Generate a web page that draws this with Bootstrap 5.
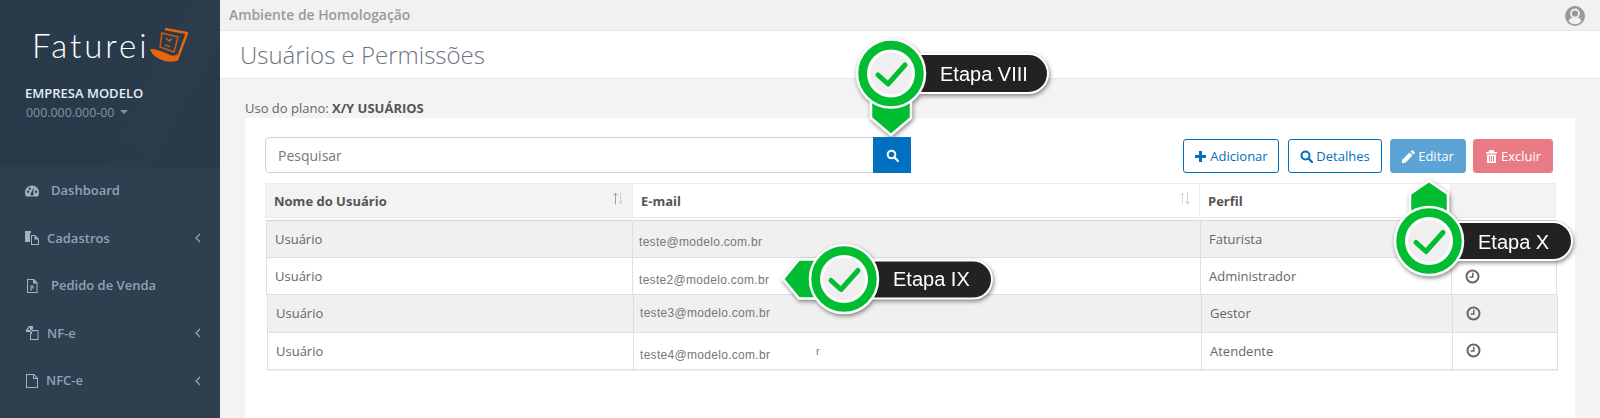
<!DOCTYPE html>
<html lang="pt-BR">
<head>
<meta charset="utf-8">
<title>Usuários e Permissões</title>
<link href="https://cdn.jsdelivr.net/npm/bootstrap@5.3.0/dist/css/bootstrap.min.css" rel="stylesheet">
<style>
html,body{height:418px;overflow:hidden}
body{font-family:"Open Sans","Liberation Sans",sans-serif;background:#f3f3f3;color:#666;font-size:13px}
.stage{position:relative;height:418px;width:1600px}
.side{width:220px;flex:none;background:#2f3f50;color:#8fa2b8}
.side-head{height:167px;padding-top:27px;background:
 linear-gradient(118deg,transparent 62%,rgba(255,255,255,.008) 62%,rgba(255,255,255,.008) 78%,transparent 78%),
 linear-gradient(40deg,rgba(0,0,0,.025) 38%,transparent 38%),
 #293a4b}
.brand{height:36px;padding-left:32px;gap:0}
.brand-word{font-family:"Lato","Open Sans",sans-serif;font-weight:300;font-size:33px;line-height:36px;color:#fff;letter-spacing:3px}
.co-name{margin:20px 0 0 25px;font-weight:600;font-size:13px;line-height:20px;color:#e6edf5}
.co-doc{margin:0 0 0 26px;font-size:12.4px;line-height:20px;color:#8293a6}
.caret-mini{display:inline-block;margin-left:6px;vertical-align:3px;border:4px solid transparent;border-top-color:#8293a6;border-bottom:0}
.side-link{height:47.5px;color:#8fa2b8;font-weight:600;font-size:13px;padding:0 19.5px 0 25px}
.side-link:hover{color:#8fa2b8}
.side-ico{width:14px;height:16px;flex:none;fill:#a3b2c4}
.lab-wide{margin-left:12px}
.lab-mid{margin-left:7px}
.lab-nar{margin-left:8px}
.chev{width:6px;height:10px;margin-left:auto;fill:none;stroke:#8fa2b8;stroke-width:1.3}
.main-col{min-width:0}
.topline{height:31px;padding:0 15px 0 9px;border-bottom:1px solid #e6e6e6;background:#f1f1f1;font-weight:600;font-size:13.9px;color:#9a9a9a}
.user-ico{width:20px;height:20px;margin-top:2px}
.titlebar{height:48px;padding-left:20px;background:#fff;border-bottom:1px solid #e8e8e8}
.titlebar h1{font-size:24px;font-weight:300;margin:0;color:#6b7480;line-height:47px}
.plan{margin:20px 0 0 25px;font-size:13px;line-height:18px;height:19px;color:#666}
.plan b{color:#555}
.panel{margin:0 25px 0 25px;padding:19px 20px 0 20px;background:#fff;height:300px}
.search-box{width:646px;height:36px}
.search-box .form-control{border-radius:4px 0 0 4px;border-color:#ccd3da;font-size:14px;padding-left:12px;color:#777;box-shadow:none;height:36px}
.search-box .form-control::placeholder{color:#777}
.search-btn{width:38px;padding:0;border-radius:0;background:#0070c0;border-color:#0070c0;color:#fff}
.act-group{margin-right:2px;height:34px;margin-top:2px}
.act{height:34px;font-size:13px;padding:0;display:inline-flex;align-items:center;justify-content:center;gap:3px;border-radius:3px;line-height:1}
.act svg{width:13px;height:13px;flex:none;fill:currentColor}
.act-line{background:#fff;border-color:#0070c0;color:#0070c0}
.act-add{width:96px;margin-right:9px}
.act-det{width:94px;margin-right:8px}
.act-edit{width:76px;margin-right:7px;background:#5ca3d6;border-color:#5ca3d6;color:#fff}
.act-del{width:80px;background:#e97b86;border-color:#e97b86;color:#fff}
.grid{table-layout:fixed;margin:0;--bs-table-bg:transparent;--bs-table-color:#666;--bs-table-striped-bg:transparent;border-collapse:collapse;width:1290px}
.grid td,.grid th{height:37px;padding:0 8px;vertical-align:middle;border:1px solid #dcdfe3;border-width:0 1px 1px 1px;box-shadow:none;font-size:13px;line-height:18px;white-space:nowrap}
.c1{width:367px}.c2{width:567px}.c3{width:251px}.c4{width:105px}
.d1{width:366px}.d2{width:568px}.d3{width:251px}.d4{width:105px}
.grid-head{margin-top:10px}
.grid-head th{height:34px;font-weight:700;color:#555;border:1px solid #ececec;background:#fff;position:relative}
.grid-head th.tone{background:#f3f3f3}
.sorter{position:absolute;right:8px;top:8px;width:12px;height:13px;fill:none;stroke-width:1}
.grid-a{margin:2px 0 0 1px}
.grid-a tr:first-child td{border-top:1px solid #d3d5d9}
.grid-b{margin-left:2px}
.tone-row td{background:#f0f0f0}
.mail{font-family:"Liberation Sans",sans-serif;font-size:12px;letter-spacing:.3px;color:#777;display:block;position:relative;left:-2px}
.m1{top:3px}.m2{top:4px}.m3{top:0}.m4{top:4px}
.stray{position:absolute;left:176px;top:-4px;font-size:11px}
.grid td.strip-cell{height:2px;padding:0;line-height:0;font-size:0;border-bottom:0;background:#f3f3f3}
.clk{width:15px;height:15px;display:block;margin-left:5px;fill:none;stroke:#666;stroke-width:2}
.mk{position:absolute;filter:drop-shadow(1px 2px 2px rgba(0,0,0,.45))}
.mk svg{display:block;width:100%;height:100%}
.mk-8{left:851px;top:30px;width:205px;height:115px}
.mk-9{left:775px;top:240px;width:225px;height:80px}
.mk-10{left:1389px;top:175px;width:190px;height:108px}
.mk-lab{position:absolute;font-family:"Liberation Sans",Arial,sans-serif;font-size:20px;line-height:24px;color:#fff;white-space:nowrap}
.mk-8 .mk-lab{left:89px;top:32px}
.mk-9 .mk-lab{left:118px;top:27px}
.mk-10 .mk-lab{left:89px;top:55px}
</style>
</head>
<body>
<svg width="0" height="0" class="position-absolute">
 <defs>
  <g id="badge">
   <circle r="34" fill="#02bd31" stroke="#fff" stroke-width="2.5"/>
   <circle r="24" fill="#fff"/>
   <circle r="21" fill="#efefef"/>
   <path d="M-13 1.5-3 10.5 14-8.5" fill="none" stroke="#02bd31" stroke-width="5" stroke-linecap="round" stroke-linejoin="round"/>
  </g>
  <g id="clock-i"><circle cx="7.5" cy="7.5" r="6"/><path d="M7.8 3.8v4.2H4.6" stroke-width="1.5"/></g>
 </defs>
</svg>
<div class="stage d-flex">
 <aside class="side d-flex flex-column">
  <div class="side-head">
   <div class="brand d-flex align-items-center">
    <span class="brand-word">Faturei</span>
    <svg width="38" height="36" viewBox="0 0 38 36">
     <path d="M15 2 37 6 27 33" fill="none" stroke="#e8650e" stroke-width="2.400"/>
     <path d="M0 22C5 22 12 24 18 27c4 2 7 2 9 0v7C20 36 12 34 6 30 3 28 1 25 0 22z" fill="#e8650e"/>
     <path d="M12 6 28 10 24 25 10 20z" fill="none" stroke="#c9590f" stroke-width="1.600"/>
     <path d="M16 11l3 3 3-2M15 18l5 1.500" fill="none" stroke="#c9590f" stroke-width="1.600"/>
    </svg>
   </div>
   <div class="co-name">EMPRESA MODELO</div>
   <div class="co-doc">000.000.000-00<span class="caret-mini"></span></div>
  </div>
  <nav class="nav flex-column">
   <a class="nav-link side-link d-flex align-items-center" href="#">
    <svg class="side-ico" viewBox="0 0 14 16"><path d="M7 2.5a7 7 0 0 0-7 7c0 1.5.4 2.9 1.2 4h11.6A7 7 0 0 0 14 9.5a7 7 0 0 0-7-7zM3 10a1.2 1.2 0 1 1 0-2.4A1.2 1.2 0 0 1 3 10zm1.8-3.2a1.2 1.2 0 1 1 0-2.4 1.2 1.2 0 0 1 0 2.4zM7 12.5a1.6 1.6 0 0 1-.7-3L8.5 5l.7.3L7.900 9.500a1.600 1.600 0 0 1-.9 3zM11 10a1.200 1.200 0 1 1 0-2.400A1.200 1.200 0 0 1 11 10z"/></svg>
    <span class="lab-wide">Dashboard</span></a>
   <a class="nav-link side-link d-flex align-items-center" href="#">
    <svg class="side-ico" viewBox="0 0 14 16"><path d="M0 1h6v2H5v9H0zM6 5h4l4 4v6H6zm1 1v8h6V9.500H9.500V6z" fill-rule="evenodd"/></svg>
    <span class="lab-nar">Cadastros</span>
    <svg class="chev" viewBox="0 0 6 10"><path d="M5 1 1 5l4 4"/></svg></a>
   <a class="nav-link side-link d-flex align-items-center" href="#">
    <svg class="side-ico" viewBox="0 0 14 16"><path d="M2 1h7l3.500 3.500V15H2zm1 1v12h8.500V5.500H8V2zm2.500 5.500h3v3H6.500V13h-1zm1 1v1h1v-1z" fill-rule="evenodd"/></svg>
    <span class="lab-wide">Pedido de Venda</span></a>
   <a class="nav-link side-link d-flex align-items-center" href="#">
    <svg class="side-ico" viewBox="0 0 14 16"><path d="M4 1h4v3L6 7H1V5zm1 1.500L2.500 5H5zM6 5h7.500v10H5V8zm1 1.500V9H6v5h6.500V6z" fill-rule="evenodd"/></svg>
    <span class="lab-nar">NF-e</span>
    <svg class="chev" viewBox="0 0 6 10"><path d="M5 1 1 5l4 4"/></svg></a>
   <a class="nav-link side-link d-flex align-items-center" href="#">
    <svg class="side-ico" viewBox="0 0 14 16"><path d="M1 1h8l4 4v10H1zm1 1v12h10V6H8V2zm7 .500V5h2.500z" fill-rule="evenodd"/></svg>
    <span class="lab-mid">NFC-e</span>
    <svg class="chev" viewBox="0 0 6 10"><path d="M5 1 1 5l4 4"/></svg></a>
  </nav>
 </aside>
 <main class="main-col flex-grow-1">
  <div class="topline d-flex justify-content-between align-items-center">
   <span>Ambiente de Homologação</span>
   <svg class="user-ico" viewBox="0 0 20 20"><circle cx="10" cy="10" r="10" fill="#999"/><circle cx="10" cy="7.500" r="4" fill="none" stroke="#f1f1f1" stroke-width="1.800"/><path d="M3.500 15c1-2.500 3-3.500 4-3.500h5c1 0 3 1 4 3.500-1.500 2-4 3.300-6.500 3.300S5 17 3.500 15z" fill="#f1f1f1"/></svg>
  </div>
  <div class="titlebar"><h1>Usuários e Permissões</h1></div>
  <div class="plan">Uso do plano: <b>X/Y USUÁRIOS</b></div>
  <section class="panel">
   <div class="d-flex justify-content-between align-items-start">
    <div class="input-group search-box">
     <input class="form-control" type="text" placeholder="Pesquisar">
     <button class="btn search-btn d-flex align-items-center justify-content-center" type="button" aria-label="Pesquisar">
      <svg width="13" height="13" viewBox="0 0 13 13" fill="none" stroke="#fff"><circle cx="5.500" cy="5.500" r="3.800" stroke-width="2"/><path d="M8.500 8.500 12 12" stroke-width="2.400" stroke-linecap="round"/></svg>
     </button>
    </div>
    <div class="d-flex act-group">
     <button class="btn act act-line act-add" type="button"><svg viewBox="0 0 13 13"><path d="M5 1h3v4h4v3H8v4H5V8H1V5h4z"/></svg>Adicionar</button>
     <button class="btn act act-line act-det" type="button"><svg viewBox="0 0 13 13"><circle cx="5.500" cy="5.500" r="4" fill="none" stroke="currentColor" stroke-width="2"/><path d="M8.500 8.500 12 12" fill="none" stroke="currentColor" stroke-width="2.400" stroke-linecap="round"/></svg>Detalhes</button>
     <button class="btn act act-edit" type="button"><svg viewBox="0 0 13 13"><path d="M0 10 7.500 2.500 10.500 5.500 3 13H0zM8.500 1.500 9.500.5a1 1 0 0 1 1.400 0l1.600 1.600a1 1 0 0 1 0 1.400l-1 1z"/></svg>Editar</button>
     <button class="btn act act-del" type="button"><svg viewBox="0 0 13 13"><path d="M4.500 0h4l1 2H12v1.500H1V2h2.500zM2 4.500h9V13H2zm2 1.500v5.500h1V6zm2 0v5.500h1V6zm2 0v5.500h1V6z" fill-rule="evenodd"/></svg>Excluir</button>
    </div>
   </div>
   <table class="table grid grid-head">
    <colgroup><col class="c1"><col class="c2"><col class="c3"><col class="c4"></colgroup>
    <thead><tr>
     <th class="tone">Nome do Usuário<svg class="sorter" viewBox="0 0 12 13"><path d="M3.500 12.500V1M1.500 3.500l2-2.500 2 2.500" stroke="#b59a9a"/><path d="M8.500 .5V12M6.500 9.500l2 2.500 2-2.500" stroke="#cfcfcf"/></svg></th>
     <th>E-mail<svg class="sorter" viewBox="0 0 12 13"><path d="M3.500 12.500V1M1.500 3.500l2-2.500 2 2.500" stroke="#dcdcdc"/><path d="M8.500 .5V12M6.500 9.500l2 2.500 2-2.500" stroke="#cfcfcf"/></svg></th>
     <th>Perfil</th>
     <th class="tone"></th>
    </tr></thead>
   </table>
   <table class="table grid grid-a">
    <colgroup><col class="d1"><col class="d2"><col class="d3"><col class="d4"></colgroup>
    <tbody>
     <tr class="tone-row"><td>Usuário</td><td><span class="mail m1">teste@modelo.com.br</span></td><td>Faturista</td><td><svg class="clk" viewBox="0 0 15 15"><use href="#clock-i"/></svg></td></tr>
     <tr><td>Usuário</td><td><span class="mail m2">teste2@modelo.com.br</span></td><td>Administrador</td><td><svg class="clk" viewBox="0 0 15 15"><use href="#clock-i"/></svg></td></tr>
    </tbody>
   </table>
   <table class="table grid grid-b">
    <colgroup><col class="d1"><col class="d2"><col class="d3"><col class="d4"></colgroup>
    <tbody>
     <tr class="tone-row"><td>Usuário</td><td><span class="mail m3">teste3@modelo.com.br</span></td><td>Gestor</td><td><svg class="clk" viewBox="0 0 15 15"><use href="#clock-i"/></svg></td></tr>
     <tr><td>Usuário</td><td><span class="mail m4">teste4@modelo.com.br<span class="stray">r</span></span></td><td>Atendente</td><td><svg class="clk" viewBox="0 0 15 15"><use href="#clock-i"/></svg></td></tr>
     <tr><td class="strip-cell"></td><td class="strip-cell"></td><td class="strip-cell"></td><td class="strip-cell"></td></tr>
    </tbody>
   </table>
  </section>
 </main>

 <div class="mk mk-8">
  <svg viewBox="0 0 205 115"><g transform="translate(40 43.500)">
   <rect x="0" y="-19.500" width="157" height="39" rx="19.500" fill="#222" stroke="#fff" stroke-width="2"/>
   <path d="M-20 10V44.500L0 61.500 20 44.500V10z" fill="#02bd31" stroke="#fff" stroke-width="2.500"/>
   <use href="#badge"/></g></svg>
  <span class="mk-lab">Etapa VIII</span>
 </div>
 <div class="mk mk-9">
  <svg viewBox="0 0 225 80"><g transform="translate(69 39)">
   <rect x="0" y="-18.500" width="148" height="38" rx="19" fill="#222" stroke="#fff" stroke-width="2"/>
   <path d="M-10 -19.500H-45L-61 0-45 19.500H-10z" fill="#02bd31" stroke="#fff" stroke-width="2.500"/>
   <use href="#badge"/></g></svg>
  <span class="mk-lab">Etapa IX</span>
 </div>
 <div class="mk mk-10">
  <svg viewBox="0 0 190 108"><g transform="translate(40 66)">
   <rect x="0" y="-19" width="143" height="38" rx="19" fill="#222" stroke="#fff" stroke-width="2"/>
   <path d="M-19 -10V-47L0 -60 19 -47V-10z" fill="#02bd31" stroke="#fff" stroke-width="2.500"/>
   <use href="#badge"/></g></svg>
  <span class="mk-lab">Etapa X</span>
 </div>
</div>
<script src="https://cdn.jsdelivr.net/npm/bootstrap@5.3.0/dist/js/bootstrap.bundle.min.js"></script>
</body>
</html>
